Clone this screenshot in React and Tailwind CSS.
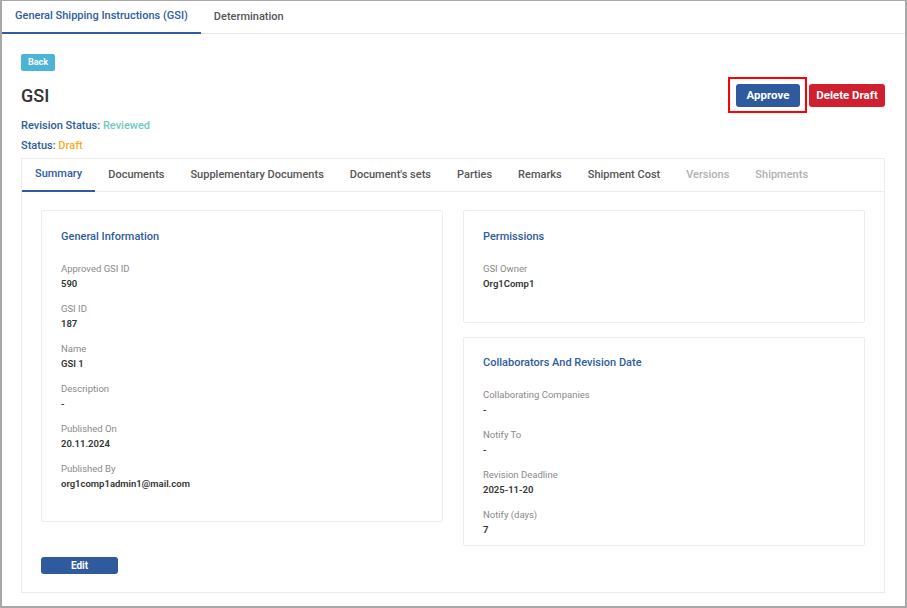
const FONT = { fontFamily: 'Roboto, "Liberation Sans", sans-serif' };

const SUB_TABS = [
  { label: 'Summary', active: true },
  { label: 'Documents' },
  { label: 'Supplementary Documents' },
  { label: "Document's sets" },
  { label: 'Parties' },
  { label: 'Remarks' },
  { label: 'Shipment Cost' },
  { label: 'Versions', disabled: true },
  { label: 'Shipments', disabled: true },
];

function Field({ label, value }) {
  return (
    <div className="mb-[10px] last:mb-0">
      <div className="text-[9.5px] leading-[15px] text-[#8a8a8a]">{label}</div>
      <div className="text-[9.5px] leading-[15px] font-semibold text-[#333]">{value}</div>
    </div>
  );
}

function InfoCard({ title, fields, className = '' }) {
  return (
    <div className={`border border-[#ececec] rounded-[2px] bg-white px-[19px] ${className}`}>
      <h3 className="text-[11px] leading-[16px] font-medium text-[#2e5c9e] mb-[16px]">{title}</h3>
      {fields.map((f) => (
        <Field key={f.label} label={f.label} value={f.value} />
      ))}
    </div>
  );
}

export default function App() {
  return (
    <div style={FONT} className="w-[907px] h-[608px] bg-white border-2 border-t border-[#a8a8a8] flex flex-col overflow-hidden">
      {/* top tabs */}
      <div className="flex h-[33px] border-b border-[#e6e6e6] shrink-0">
        <div className="px-[13px] flex items-center text-[11px] font-medium text-[#2e5c9e] border-b-2 border-[#2e5c9e] -mb-px">
          General Shipping Instructions (GSI)
        </div>
        <div className="px-[13px] flex items-center text-[11px] font-medium text-[#555]">Determination</div>
      </div>

      <div className="pl-[19px] pr-[20px] pt-[20px]">
        <button className="block h-[17px] px-[7px] rounded-[2px] bg-[#4cb4d8] text-white text-[9px] font-bold leading-none">
          Back
        </button>

        <div className="flex items-center justify-between mt-[13px] h-[23px]">
          <h1 className="text-[18px] font-medium text-[#333] leading-none">GSI</h1>
          <div className="flex items-center gap-[9px]">
            <div className="relative">
              <button className="block h-[23px] w-[64px] rounded-[3px] bg-[#2f5b9e] text-white text-[11.5px] font-bold">
                Approve
              </button>
              <span className="absolute -left-[8px] -right-[7px] -top-[7px] -bottom-[6px] border-2 border-[#ff0000] pointer-events-none" />
            </div>
            <button className="block h-[23px] w-[76px] rounded-[3px] bg-[#d01f2f] text-white text-[11.5px] font-bold">
              Delete Draft
            </button>
          </div>
        </div>

        <div className="mt-[9px] text-[11px] font-medium leading-[20px]">
          <div>
            <span className="text-[#2e5c9e]">Revision Status: </span>
            <span className="text-[#6fcabd]">Reviewed</span>
          </div>
          <div>
            <span className="text-[#2e5c9e]">Status: </span>
            <span className="text-[#f2ae1c]">Draft</span>
          </div>
        </div>

        {/* inner card */}
        <div className="mt-[2px] border border-[#ececec] bg-white">
          <div className="flex h-[33px] border-b border-[#ececec]">
            {SUB_TABS.map((t) => (
              <div
                key={t.label}
                className={`px-[13px] flex items-center text-[11px] font-medium ${
                  t.active
                    ? 'text-[#2e5c9e] border-b-2 border-[#2e5c9e] -mb-px'
                    : t.disabled
                    ? 'text-[#b0b0b0]'
                    : 'text-[#555]'
                }`}
              >
                {t.label}
              </div>
            ))}
          </div>

          <div className="px-[19px] pt-[18px] pb-[18px]">
            <div className="grid grid-cols-2 gap-x-[20px] items-start">
              <InfoCard
                title="General Information"
                className="pt-[18px] pb-[30px]"
                fields={[
                  { label: 'Approved GSI ID', value: '590' },
                  { label: 'GSI ID', value: '187' },
                  { label: 'Name', value: 'GSI 1' },
                  { label: 'Description', value: '-' },
                  { label: 'Published On', value: '20.11.2024' },
                  { label: 'Published By', value: 'org1comp1admin1@mail.com' },
                ]}
              />
              <div className="flex flex-col gap-[14px]">
                <InfoCard
                  title="Permissions"
                  className="pt-[18px] pb-[31px]"
                  fields={[{ label: 'GSI Owner', value: 'Org1Comp1' }]}
                />
                <InfoCard
                  title="Collaborators And Revision Date"
                  className="pt-[17px] pb-[8px]"
                  fields={[
                    { label: 'Collaborating Companies', value: '-' },
                    { label: 'Notify To', value: '-' },
                    { label: 'Revision Deadline', value: '2025-11-20' },
                    { label: 'Notify (days)', value: '7' },
                  ]}
                />
              </div>
            </div>
            <button className="block mt-[11px] h-[17px] w-[77px] rounded-[3px] bg-[#2f5b9e] text-white text-[10px] font-bold leading-none">
              Edit
            </button>
          </div>
        </div>
      </div>
    </div>
  );
}
